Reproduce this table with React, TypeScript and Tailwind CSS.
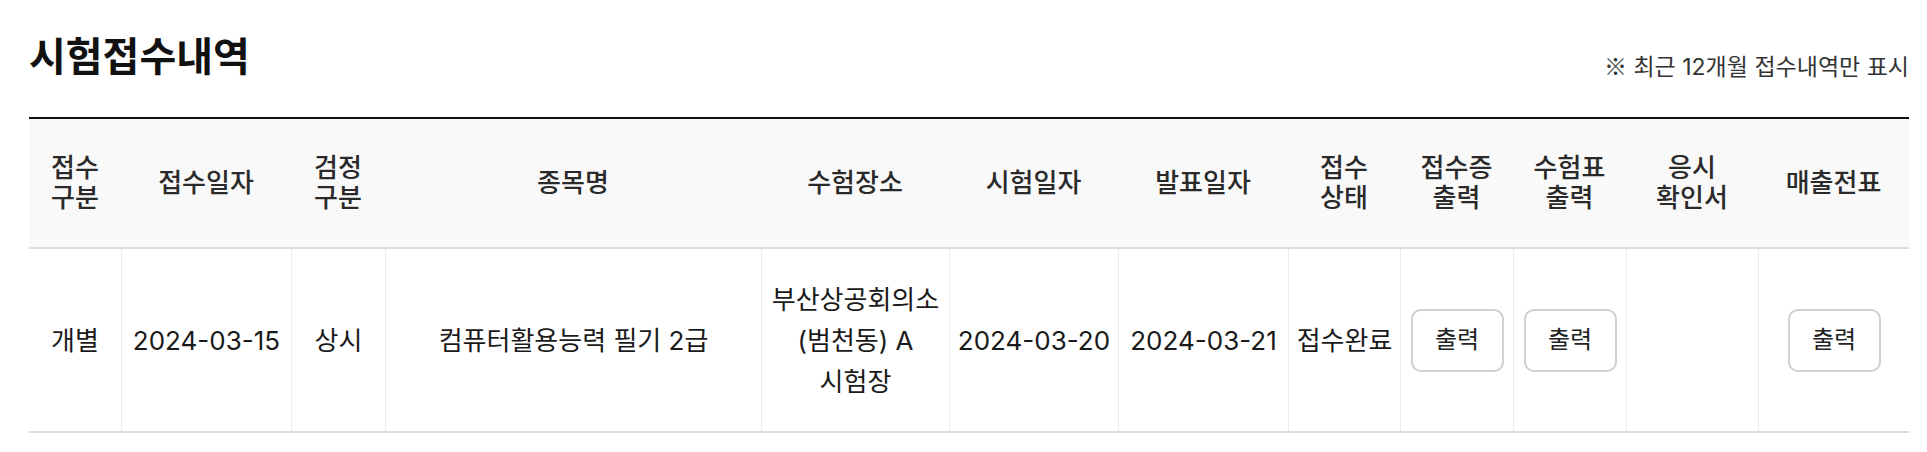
const cols =
  "grid grid-cols-[92px_170px_94px_376px_188px_169px_170px_112px_113px_113px_132px_151px]"

const headers: string[][] = [
  ["접수", "구분"],
  ["접수일자"],
  ["검정", "구분"],
  ["종목명"],
  ["수험장소"],
  ["시험일자"],
  ["발표일자"],
  ["접수", "상태"],
  ["접수증", "출력"],
  ["수험표", "출력"],
  ["응시", "확인서"],
  ["매출전표"],
]

type TCell = { text?: string; button?: boolean }

const row: TCell[] = [
  { text: "개별" },
  { text: "2024-03-15" },
  { text: "상시" },
  { text: "컴퓨터활용능력 필기 2급" },
  { text: "부산상공회의소 (범천동) A 시험장" },
  { text: "2024-03-20" },
  { text: "2024-03-21" },
  { text: "접수완료" },
  { button: true },
  { button: true },
  {},
  { button: true },
]

function PrintButton() {
  return (
    <button
      type="button"
      className="h-[63px] w-[93px] rounded-[10px] border-2 border-[#cfcfcf] bg-white text-[24px] leading-none text-[#222]"
    >
      출력
    </button>
  )
}

export default function App() {
  return (
    <div className="h-[452px] w-[1927px] bg-white font-['Inter','Noto_Sans_CJK_KR',sans-serif]">
      <div className="ml-[29px] w-[1880px] pt-[37px]">
        <div className="flex items-end justify-between">
          <h2 className="pb-[2px] text-[40px] leading-none font-bold text-[#111]">
            시험접수내역
          </h2>
          <p className="text-[23px] leading-none text-[#333]">
            <span className="font-['Noto_Sans_CJK_KR',sans-serif]">※</span> 최근
            12개월 접수내역만 표시
          </p>
        </div>

        <div className="mt-[38px] border-t-2 border-[#111]">
          <div
            className={`${cols} h-[130px] border-b-2 border-[#dcdcdc] bg-[#f9f9f9]`}
          >
            {headers.map((lines, i) => (
              <div
                key={i}
                className="flex flex-col items-center justify-center text-center text-[26px] leading-[30px] font-medium text-[#2a2a2a]"
              >
                {lines.map((line) => (
                  <span key={line}>{line}</span>
                ))}
              </div>
            ))}
          </div>

          <div className={`${cols} h-[184px] border-b-2 border-[#dcdcdc]`}>
            {row.map((cell, i) => (
              <div
                key={i}
                className={
                  "flex items-center justify-center text-center text-[26px] leading-[41px] break-keep text-[#1a1a1a] " +
                  (i > 0 ? "border-l border-[#ececec]" : "")
                }
              >
                {cell.button ? <PrintButton /> : cell.text}
              </div>
            ))}
          </div>
        </div>
      </div>
    </div>
  )
}
